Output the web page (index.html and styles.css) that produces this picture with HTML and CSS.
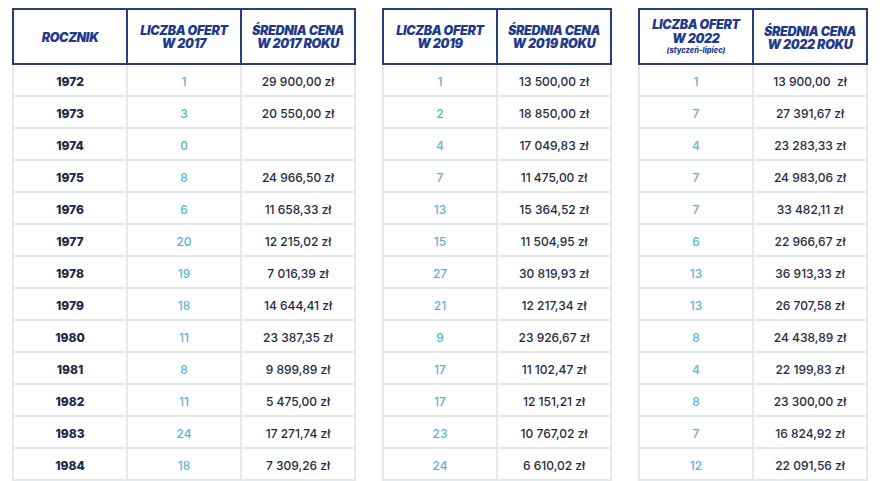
FILE: index.html
```html
<!DOCTYPE html>
<html lang="pl">
<head>
<meta charset="utf-8">
<title>Oferty wg rocznika</title>
<link rel="stylesheet" href="styles.css">
</head>
<body>
<div class="page">
  <div class="tbl tbl3">
    <div class="th first"><span class="lbl">ROCZNIK</span></div>
    <div class="th"><span class="lbl">LICZBA OFERT<br>W 2017</span></div>
    <div class="th"><span class="lbl">ŚREDNIA CENA<br>W 2017 ROKU</span></div>

    <div class="td first year">1972</div><div class="td cnt">1</div><div class="td price">29 900,00 zł</div>
    <div class="td first year">1973</div><div class="td cnt">3</div><div class="td price">20 550,00 zł</div>
    <div class="td first year">1974</div><div class="td cnt">0</div><div class="td price"></div>
    <div class="td first year">1975</div><div class="td cnt">8</div><div class="td price">24 966,50 zł</div>
    <div class="td first year">1976</div><div class="td cnt">6</div><div class="td price">11 658,33 zł</div>
    <div class="td first year">1977</div><div class="td cnt">20</div><div class="td price">12 215,02 zł</div>
    <div class="td first year">1978</div><div class="td cnt">19</div><div class="td price">7 016,39 zł</div>
    <div class="td first year">1979</div><div class="td cnt">18</div><div class="td price">14 644,41 zł</div>
    <div class="td first year">1980</div><div class="td cnt">11</div><div class="td price">23 387,35 zł</div>
    <div class="td first year">1981</div><div class="td cnt">8</div><div class="td price">9 899,89 zł</div>
    <div class="td first year">1982</div><div class="td cnt">11</div><div class="td price">5 475,00 zł</div>
    <div class="td first year">1983</div><div class="td cnt">24</div><div class="td price">17 271,74 zł</div>
    <div class="td first year">1984</div><div class="td cnt">18</div><div class="td price">7 309,26 zł</div>
  </div>

  <div class="tbl tbl2">
    <div class="th first"><span class="lbl">LICZBA OFERT<br>W 2019</span></div>
    <div class="th"><span class="lbl">ŚREDNIA CENA<br>W 2019 ROKU</span></div>

    <div class="td first cnt">1</div><div class="td price">13 500,00 zł</div>
    <div class="td first cnt">2</div><div class="td price">18 850,00 zł</div>
    <div class="td first cnt">4</div><div class="td price">17 049,83 zł</div>
    <div class="td first cnt">7</div><div class="td price">11 475,00 zł</div>
    <div class="td first cnt">13</div><div class="td price">15 364,52 zł</div>
    <div class="td first cnt">15</div><div class="td price">11 504,95 zł</div>
    <div class="td first cnt">27</div><div class="td price">30 819,93 zł</div>
    <div class="td first cnt">21</div><div class="td price">12 217,34 zł</div>
    <div class="td first cnt">9</div><div class="td price">23 926,67 zł</div>
    <div class="td first cnt">17</div><div class="td price">11 102,47 zł</div>
    <div class="td first cnt">17</div><div class="td price">12 151,21 zł</div>
    <div class="td first cnt">23</div><div class="td price">10 767,02 zł</div>
    <div class="td first cnt">24</div><div class="td price">6 610,02 zł</div>
  </div>

  <div class="tbl tbl2">
    <div class="th first"><span class="lbl three">LICZBA OFERT<br>W 2022<span class="sub">(styczeń-lipiec)</span></span></div>
    <div class="th"><span class="lbl low">ŚREDNIA CENA<br>W 2022 ROKU</span></div>

    <div class="td first cnt">1</div><div class="td price">13 900,00&nbsp; zł</div>
    <div class="td first cnt">7</div><div class="td price">27 391,67 zł</div>
    <div class="td first cnt">4</div><div class="td price">23 283,33 zł</div>
    <div class="td first cnt">7</div><div class="td price">24 983,06 zł</div>
    <div class="td first cnt">7</div><div class="td price">33 482,11 zł</div>
    <div class="td first cnt">6</div><div class="td price">22 966,67 zł</div>
    <div class="td first cnt">13</div><div class="td price">36 913,33 zł</div>
    <div class="td first cnt">13</div><div class="td price">26 707,58 zł</div>
    <div class="td first cnt">8</div><div class="td price">24 438,89 zł</div>
    <div class="td first cnt">4</div><div class="td price">22 199,83 zł</div>
    <div class="td first cnt">8</div><div class="td price">23 300,00 zł</div>
    <div class="td first cnt">7</div><div class="td price">16 824,92 zł</div>
    <div class="td first cnt">12</div><div class="td price">22 091,56 zł</div>
  </div>
</div>
</body>
</html>
```

FILE: styles.css
```css
* { box-sizing: border-box; }

html, body {
  margin: 0;
  background: #ffffff;
}

body {
  font-family: "Inter", "Liberation Sans", sans-serif;
  width: 887px;
  height: 481px;
  overflow: hidden;
}

.page {
  display: flex;
  align-items: flex-start;
  gap: 26px;
  padding: 8px 0 0 12px;
}

.tbl {
  display: grid;
  grid-template-rows: 57px;
  grid-auto-rows: 32px;
}

.tbl3 { grid-template-columns: 116px 114px 114px; }
.tbl2 { grid-template-columns: 116px 114px; }

.th {
  display: flex;
  align-items: center;
  justify-content: center;
  text-align: center;
  border-top: 2px solid #2b3d7b;
  border-bottom: 2px solid #2b3d7b;
  border-right: 2px solid #2b3d7b;
  color: #1f3a8c;
  font-weight: 900;
  font-style: italic;
  font-size: 12.5px;
  letter-spacing: -0.3px;
}

.th.first { border-left: 2px solid #2b3d7b; }

.lbl {
  display: block;
  line-height: 13px;
  padding-top: 1px;
}

.lbl.three {
  line-height: 14px;
  padding-top: 0;
  margin-top: -1px;
}

.lbl.low { padding-top: 3px; }

.sub {
  display: block;
  font-size: 7.5px;
  line-height: 9px;
  font-weight: 800;
  letter-spacing: 0;
}

.td {
  display: flex;
  align-items: center;
  justify-content: center;
  border-right: 2px solid #e4e9ec;
  border-bottom: 2px solid #e4e9ec;
  font-size: 12px;
  padding-top: 3px;
}

.td.first { border-left: 2px solid #e4e9ec; }

.year {
  color: #1d2748;
  font-weight: 800;
}

.cnt {
  color: #5cb3d3;
  font-weight: 500;
}

.price {
  color: #242a44;
  font-weight: 500;
}
```
